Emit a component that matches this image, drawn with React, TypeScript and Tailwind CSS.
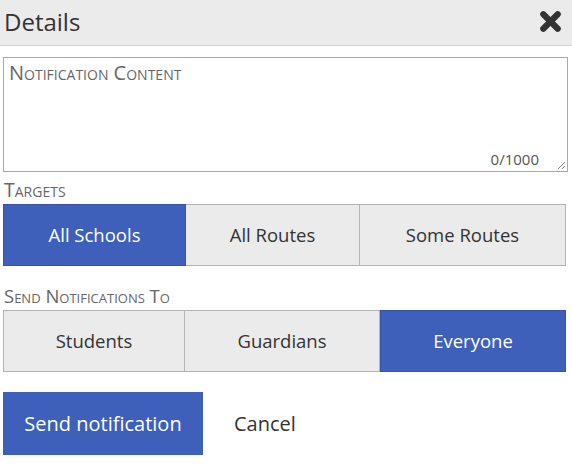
import React from "react";

const font = { fontFamily: '"Open Sans", "Liberation Sans", sans-serif' };

function Seg({ label, active, w, first }: { label: string; active?: boolean; w: string; first?: boolean }) {
  return (
    <div
      className={`${w} h-full flex items-center justify-center text-[18.5px] ${
        active
          ? "bg-[#3e5fba] text-white border border-[#3454ad]"
          : `bg-[#ebebeb] text-[#333] border-y border-r border-[#b3b3b3] ${first ? "border-l" : ""}`
      }`}
    >
      {label}
    </div>
  );
}

export default function App() {
  return (
    <div className="w-[572px] h-[471px] bg-white relative" style={font}>
      <div className="h-[46px] bg-[#ebebeb] border-b border-[#cfcfcf] flex items-center justify-between pl-[4px] pr-[10px]">
        <span className="text-[24px] text-[#333] leading-none -mt-[2px]">Details</span>
        <svg width="23" height="23" viewBox="0 0 24 24" className="-mt-[2px]">
          <path d="M4.5 4.5 L19.5 19.5 M19.5 4.5 L4.5 19.5" stroke="#333" strokeWidth="6.5" strokeLinecap="round" />
        </svg>
      </div>
      <div className="px-[3px] pt-[11px]">
        <div className="relative h-[115px] w-[565px] border border-[#a9a9a9]">
          <div className="absolute left-[5px] top-[0px] text-[20px] text-[#666] [font-variant:small-caps]">Notification Content</div>
          <div className="absolute right-[28px] bottom-[1px] text-[15px] text-[#555]">0/1000</div>
          <svg className="absolute right-[1px] bottom-[1px]" width="9" height="9" viewBox="0 0 9 9">
            <path d="M8 1 L1 8 M8 5 L5 8" stroke="#888" strokeWidth="1" />
          </svg>
        </div>
        <div className="mt-[6px] text-[19.5px] text-[#666] [font-variant:small-caps] leading-[24px] pl-[1px]">Targets</div>
        <div className="mt-[2px] flex h-[62px]">
          <Seg label="All Schools" active w="w-[183px]" first />
          <Seg label="All Routes" w="w-[174px]" />
          <Seg label="Some Routes" w="w-[206px]" />
        </div>
        <div className="mt-[18px] text-[18.5px] text-[#666] [font-variant:small-caps] leading-[24px] pl-[1px]">Send Notifications To</div>
        <div className="mt-[2px] flex h-[62px]">
          <Seg label="Students" w="w-[182px]" first />
          <Seg label="Guardians" w="w-[195px]" />
          <Seg label="Everyone" active w="w-[186px]" />
        </div>
        <div className="mt-[20px] flex items-center h-[63px]">
          <div className="w-[200px] h-full bg-[#3e5fba] text-white text-[20px] flex items-center justify-center">Send notification</div>
          <div className="ml-[31px] text-[20px] text-[#333]">Cancel</div>
        </div>
      </div>
    </div>
  );
}
